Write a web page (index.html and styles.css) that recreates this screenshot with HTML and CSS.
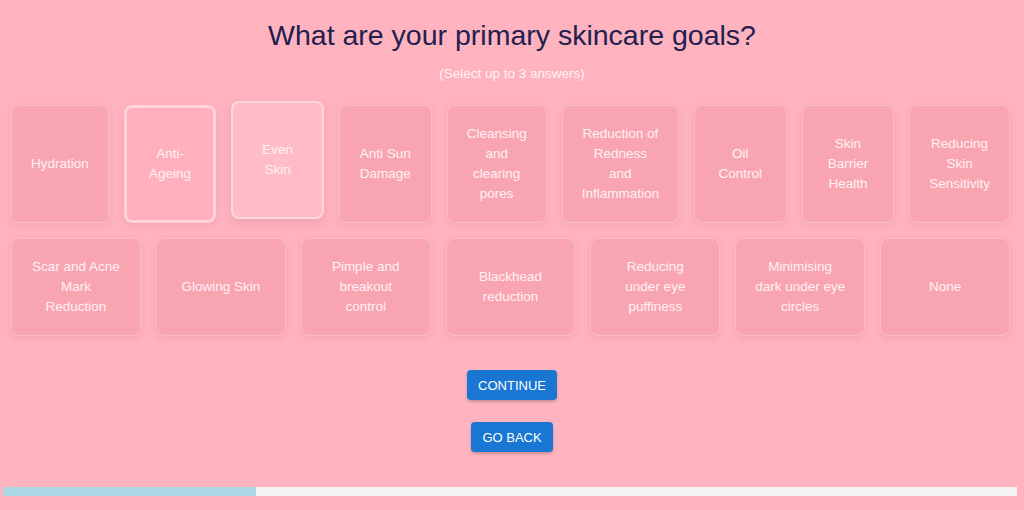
FILE: index.html
```html
<!DOCTYPE html>
<html lang="en">
<head>
	<meta charset="UTF-8">
	<title>Skincare goals</title>
	<link rel="stylesheet" href="styles.css">
</head>
<body>
	<div id="quiz">
		<h1 class="question">What are your primary skincare goals?</h1>
		<p class="hint">(Select up to 3 answers)</p>
		<div class="options">
			<div class="row">
				<div class="option">Hydration</div>
				<div class="option selected">Anti-Ageing</div>
				<div class="option hover">Even Skin</div>
				<div class="option">Anti Sun Damage</div>
				<div class="option">Cleansing and clearing pores</div>
				<div class="option">Reduction of Redness and Inflammation</div>
				<div class="option">Oil Control</div>
				<div class="option">Skin Barrier Health</div>
				<div class="option">Reducing Skin Sensitivity</div>
			</div>
			<div class="row row-wide">
				<div class="option">Scar and Acne Mark Reduction</div>
				<div class="option">Glowing Skin</div>
				<div class="option">Pimple and breakout control</div>
				<div class="option">Blackhead reduction</div>
				<div class="option">Reducing under eye puffiness</div>
				<div class="option">Minimising dark under eye circles</div>
				<div class="option">None</div>
			</div>
		</div>
		<div class="actions">
			<button class="btn">Continue</button>
			<button class="btn">Go Back</button>
		</div>
		<div class="progress">
			<div class="progress-fill"></div>
		</div>
	</div>
</body>
</html>
```

FILE: styles.css
```css
*{
	margin: 0;
	padding: 0;
	box-sizing: border-box;
}
body{
	background-color: #ffb3bf;
	font-family: "Liberation Sans", Arial, sans-serif;
	height: 510px;
	overflow: hidden;
}
#quiz{
	padding-top: 19px;
}
.question{
	text-align: center;
	font-size: 28.5px;
	line-height: 32px;
	font-weight: normal;
	color: #21204f;
}
.hint{
	margin-top: 15px;
	text-align: center;
	font-size: 13.5px;
	line-height: 16px;
	color: #fff1f4;
}
.options{
	margin: 23px 14px 0 11px;
	display: flex;
	flex-direction: column;
	gap: 15px;
}
.row{
	display: flex;
	gap: 15px;
}
.option{
	flex: 1 1 0;
	display: flex;
	align-items: center;
	justify-content: center;
	text-align: center;
	padding: 18px 19px;
	font-size: 13.5px;
	line-height: 20px;
	color: #fff1f4;
	background-color: #f9a5b1;
	border: 1px solid rgba(255, 255, 255, 0.25);
	border-radius: 8px;
	box-shadow: 0 2px 6px rgba(160, 60, 80, 0.12);
	cursor: pointer;
}
.row-wide .option{
	padding: 18px 17.5px;
}
.option.selected{
	background-color: #ffb0bc;
	border: 3px solid #ffd3dc;
	padding: 16px 17px;
}
.option.hover{
	background-color: #ffbcc7;
	border: 2px solid #ffd6de;
	padding: 17px 18px;
	transform: translateY(-4px);
	box-shadow: 0 4px 10px rgba(160, 60, 80, 0.15);
}
.actions{
	margin-top: 34px;
	display: flex;
	flex-direction: column;
	align-items: center;
	gap: 22px;
}
.btn{
	height: 30px;
	padding: 0 11px;
	border: none;
	border-radius: 4px;
	background-color: #1976d2;
	color: #fff;
	font-family: "Liberation Sans", Arial, sans-serif;
	font-size: 13px;
	text-transform: uppercase;
	box-shadow: 0 2px 3px rgba(0, 0, 0, 0.2);
	cursor: pointer;
}
.progress{
	margin: 35px 7px 0 3px;
	height: 9px;
	background-color: #f5f3f3;
}
.progress-fill{
	width: 253px;
	height: 100%;
	background-color: #acd7e6;
}
```
